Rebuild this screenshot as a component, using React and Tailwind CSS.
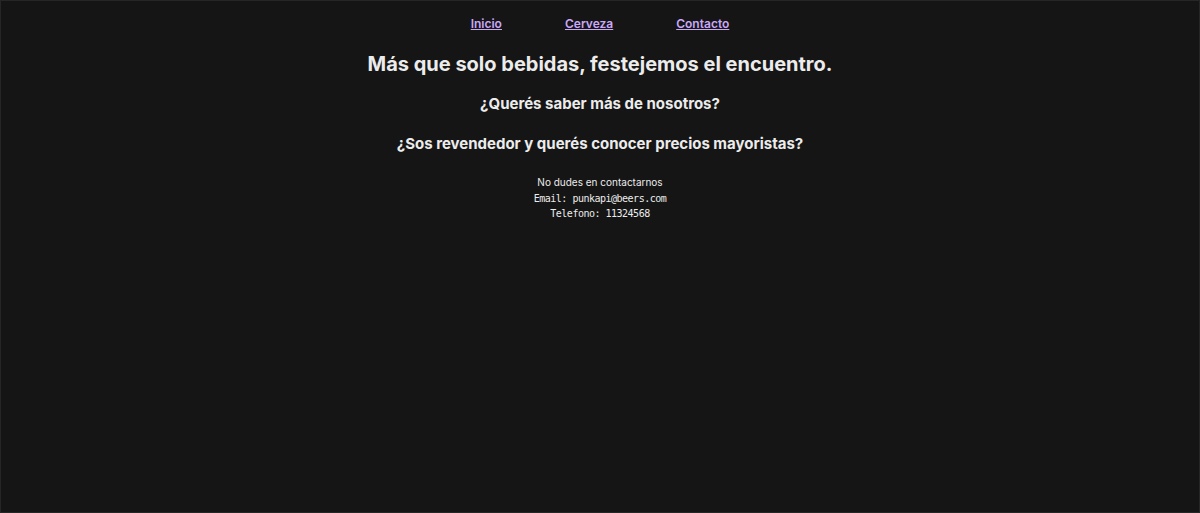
import React from "react";

const links = ["Inicio", "Cerveza", "Contacto"];

const App = () => {
  return (
    <div className="min-h-[513px] bg-[#151515] border border-[#262626] text-[#ececec] font-['Inter',sans-serif] text-center">
      <nav className="flex justify-center gap-[63px] pt-[15px]">
        {links.map((link) => (
          <a
            key={link}
            href="#"
            className="text-[12px] leading-[16px] font-semibold text-[#c9a8f7] underline"
          >
            {link}
          </a>
        ))}
      </nav>

      <h1 className="mt-[18px] text-[20px] leading-[28px] font-bold">
        Más que solo bebidas, festejemos el encuentro.
      </h1>
      <h2 className="mt-[16px] text-[15px] leading-[20px] font-bold">
        ¿Querés saber más de nosotros?
      </h2>
      <h2 className="mt-[20px] text-[15px] leading-[20px] font-bold">
        ¿Sos revendedor y querés conocer precios mayoristas?
      </h2>

      <div className="mt-[21px]">
        <p className="text-[10px] leading-[14px]">No dudes en contactarnos</p>
        <p className="mt-[2px] font-['DejaVu_Sans_Mono',monospace] text-[10px] tracking-[-0.5px] leading-[15px]">
          Email: punkapi@beers.com
        </p>
        <p className="font-['DejaVu_Sans_Mono',monospace] text-[10px] tracking-[-0.5px] leading-[15px]">
          Telefono: 11324568
        </p>
      </div>
    </div>
  );
};

export default App;
